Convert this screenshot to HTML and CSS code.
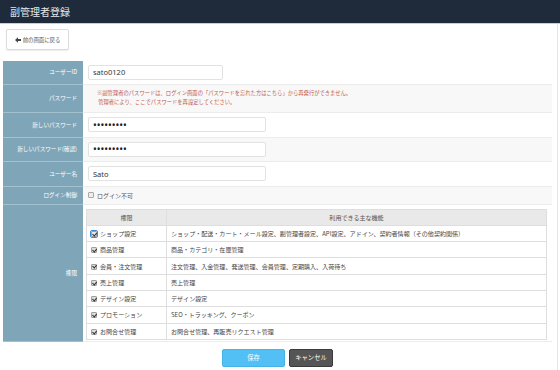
FILE: index.html
```html
<!DOCTYPE html>
<html lang="ja">
<head>
<meta charset="utf-8">
<title>副管理者登録</title>
<link rel="stylesheet" href="styles.css">
</head>
<body>
<header class="topbar"><h1 class="title">副管理者登録</h1></header>
<main class="content">
  <div class="toolbar">
    <button class="back-btn" type="button"><svg class="back-arrow" width="6" height="6" viewBox="0 0 6 6"><path d="M0 3 L3 0.3 L3 2 L6 2 L6 4 L3 4 L3 5.7 Z" fill="#444"/></svg>前の画面に戻る</button>
  </div>
  <table class="form-table">
    <tr class="row-id">
      <th>ユーザーID</th>
      <td><input class="field field-short" type="text" value="sato0120"></td>
    </tr>
    <tr class="row-note alt">
      <th>パスワード</th>
      <td><p class="note">※副管理者のパスワードは、ログイン画面の「パスワードを忘れた方はこちら」から再発行ができません。<br>&nbsp;管理者により、ここでパスワードを再設定してください。</p></td>
    </tr>
    <tr class="row-pw">
      <th>新しいパスワード</th>
      <td><input class="field pw" type="password" value="aaaaaaaaa"></td>
    </tr>
    <tr class="row-pw2 alt">
      <th>新しいパスワード(確認)</th>
      <td><input class="field pw" type="password" value="aaaaaaaaa"></td>
    </tr>
    <tr class="row-name">
      <th>ユーザー名</th>
      <td><input class="field" type="text" value="Sato"></td>
    </tr>
    <tr class="row-login alt">
      <th>ログイン制御</th>
      <td><label class="check-label"><span class="cb"></span>ログイン不可</label></td>
    </tr>
    <tr class="row-perm">
      <th>権限</th>
      <td class="perm-cell">
        <table class="perm-table">
          <tr><th class="perm-head c1">権限</th><th class="perm-head">利用できる主な機能</th></tr>
          <tr><td class="c1"><span class="cb on focus"></span>ショップ設定</td><td>ショップ・配送・カート・メール設定、副管理者設定、API設定、アドイン、契約者情報（その他契約関係）</td></tr>
          <tr><td class="c1"><span class="cb on"></span>商品管理</td><td>商品・カテゴリ・在庫管理</td></tr>
          <tr><td class="c1"><span class="cb on"></span>会員・注文管理</td><td>注文管理、入金管理、発送管理、会員管理、定期購入、入荷待ち</td></tr>
          <tr><td class="c1"><span class="cb on"></span>売上管理</td><td>売上管理</td></tr>
          <tr><td class="c1"><span class="cb on"></span>デザイン設定</td><td>デザイン設定</td></tr>
          <tr><td class="c1"><span class="cb on"></span>プロモーション</td><td>SEO・トラッキング、クーポン</td></tr>
          <tr><td class="c1"><span class="cb on"></span>お問合せ管理</td><td>お問合せ管理、再販売リクエスト管理</td></tr>
        </table>
      </td>
    </tr>
  </table>
  <div class="actions">
    <button class="btn btn-save" type="button">保存</button>
    <button class="btn btn-cancel" type="button">キャンセル</button>
  </div>
</main>
</body>
</html>
```
FILE: styles.css
```css
* { box-sizing: border-box; }
html, body { margin: 0; padding: 0; background: #fff; }
body {
  font-family: "Noto Sans CJK JP", "Noto Sans", sans-serif;
  color: #333;
  width: 560px;
  height: 370px;
  overflow: hidden;
}
.topbar {
  height: 24px;
  background: #1f2a3a;
  border-bottom: 1px solid #c9ced4;
  display: flex;
  align-items: center;
  padding-left: 10px;
}
.title {
  margin: 0;
  font-size: 10px;
  font-weight: normal;
  color: #e6e8ea;
}
.content {
  width: 558px;
  height: 346px;
  border-right: 1px solid #e6e6e6;
  padding: 5px 5px 0 3px;
}
.toolbar { height: 21px; padding-left: 3px; }
.back-btn {
  height: 21px;
  width: 63px;
  padding: 0;
  border: 1px solid #dcdcdc;
  border-radius: 2px;
  background: #fff;
  box-shadow: 0 1px 1px rgba(0,0,0,0.08);
  font-family: inherit;
  font-size: 5.4px;
  color: #555;
  display: flex;
  align-items: center;
  justify-content: center;
  gap: 2px;
}
.back-arrow { display: block; }
.form-table {
  margin-top: 11px;
  width: 549px;
  border-collapse: collapse;
  font-size: 5.6px;
}
.form-table > tbody > tr > th {
  width: 80px;
  background: #7fa6b8;
  color: #fff;
  font-weight: normal;
  text-align: right;
  padding: 0 6px 0 0;
  border-bottom: 1px solid #a3c0cd;
  vertical-align: middle;
  white-space: nowrap;
}
.form-table > tbody > tr > td {
  padding: 0 0 0 5px;
  background: #fff;
  border-bottom: 1px solid #ececec;
  vertical-align: middle;
}
.form-table > tbody > tr.alt > td { background: #f8f8f8; }
.row-id { height: 23px; }
.row-note { height: 28px; }
.row-pw { height: 25px; }
.row-pw2 { height: 24px; }
.row-name { height: 25px; }
.row-login { height: 18px; }
.row-perm { height: 135px; }
.field {
  display: block;
  width: 178px;
  height: 15px;
  border: 1px solid #e2e2e2;
  border-radius: 2px;
  background: #fff;
  padding: 0 4px;
  font-family: "Noto Sans", sans-serif;
  font-size: 7.5px;
  color: #333;
}
.field.pw { font-size: 10px; letter-spacing: 0; color: #222; }
.field-short { width: 135px; }
.note {
  margin: 0;
  padding-left: 9px;
  color: #c2584a;
  font-size: 5.3px;
  line-height: 9px;
  white-space: nowrap;
}
.check-label { display: flex; align-items: center; gap: 3px; color: #555; font-size: 6px; }
.cb {
  display: inline-block;
  width: 6px;
  height: 6px;
  border: 1px solid #a8a8a8;
  background: #eeeeee;
  border-radius: 1px;
  position: relative;
  flex: none;
}
.cb.on { background: #dcdcdc; border-color: #a0a0a0; }
.cb.on::after {
  content: "";
  position: absolute;
  left: 1.3px;
  top: -0.2px;
  width: 2px;
  height: 3.2px;
  border: solid #2a2a2a;
  border-width: 0 1.2px 1.2px 0;
  transform: rotate(40deg);
}
.cb.focus { outline: 1px solid #3b8fd6; background: #e8e8e8; }
.form-table > tbody > tr > td.perm-cell { padding: 4px 5px 1px 3px; }
.perm-table {
  width: 100%;
  border-collapse: collapse;
  background: #fff;
  font-size: 6.05px;
  color: #444;
}
.perm-table th, .perm-table td {
  border: 1px solid #dedede;
  height: 16.3px;
  padding: 0 4px;
  text-align: left;
  white-space: nowrap;
}
.perm-table .c1 { width: 80px; }
.perm-table td.c1 { padding-left: 4px; }
.perm-table td.c1 .cb { margin-right: 3px; vertical-align: -1px; }
.perm-head {
  background: #e9e9e9;
  font-weight: normal;
  text-align: center !important;
  color: #555;
  height: 16px;
}
.actions {
  display: flex;
  justify-content: center;
  gap: 4px;
  margin-top: 7px;
}
.btn {
  height: 18px;
  border-radius: 2px;
  font-family: inherit;
  font-size: 6.3px;
  color: #fff;
  padding: 0;
}
.btn-save { width: 63px; background: #52c0f5; border: 1px solid #46b3e8; }
.btn-cancel { width: 44px; background: #555; border: 1px solid #3a3a3a; }
```
